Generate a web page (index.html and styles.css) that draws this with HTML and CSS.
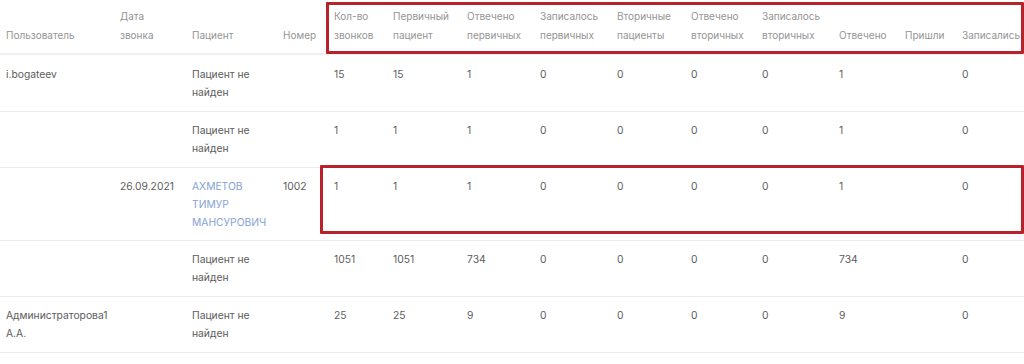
FILE: index.html
```html
<!DOCTYPE html>
<html lang="ru">
<head>
<meta charset="utf-8">
<title>Звонки</title>
<link rel="stylesheet" href="styles.css">
</head>
<body>
<div class="wrap">
  <table class="report">
    <colgroup>
      <col class="c1"><col class="c2"><col class="c3"><col class="c4"><col class="c5"><col class="c6"><col class="c7"><col class="c8"><col class="c9"><col class="c10"><col class="c11"><col class="c12"><col class="c13"><col class="c14">
    </colgroup>
    <thead>
      <tr>
        <th>Пользователь</th>
        <th>Дата<br>звонка</th>
        <th>Пациент</th>
        <th>Номер</th>
        <th>Кол-во<br>звонков</th>
        <th>Первичный<br>пациент</th>
        <th>Отвечено<br>первичных</th>
        <th>Записалось<br>первичных</th>
        <th>Вторичные<br>пациенты</th>
        <th>Отвечено<br>вторичных</th>
        <th>Записалось<br>вторичных</th>
        <th>Отвечено</th>
        <th>Пришли</th>
        <th>Записались</th>
      </tr>
    </thead>
    <tbody>
      <tr>
        <td>i.bogateev</td><td></td><td>Пациент не<br>найден</td><td></td>
        <td>15</td><td>15</td><td>1</td><td>0</td><td>0</td><td>0</td><td>0</td><td>1</td><td></td><td>0</td>
      </tr>
      <tr>
        <td></td><td></td><td>Пациент не<br>найден</td><td></td>
        <td>1</td><td>1</td><td>1</td><td>0</td><td>0</td><td>0</td><td>0</td><td>1</td><td></td><td>0</td>
      </tr>
      <tr class="tall">
        <td></td><td>26.09.2021</td><td><a class="link" href="#">АХМЕТОВ<br>ТИМУР<br>МАНСУРОВИЧ</a></td><td>1002</td>
        <td>1</td><td>1</td><td>1</td><td>0</td><td>0</td><td>0</td><td>0</td><td>1</td><td></td><td>0</td>
      </tr>
      <tr>
        <td></td><td></td><td>Пациент не<br>найден</td><td></td>
        <td>1051</td><td>1051</td><td>734</td><td>0</td><td>0</td><td>0</td><td>0</td><td>734</td><td></td><td>0</td>
      </tr>
      <tr>
        <td>Администраторова1<br>А.А.</td><td></td><td>Пациент не<br>найден</td><td></td>
        <td>25</td><td>25</td><td>9</td><td>0</td><td>0</td><td>0</td><td>0</td><td>9</td><td></td><td>0</td>
      </tr>
    </tbody>
  </table>
  <div class="mark mark-head"></div>
  <div class="mark mark-row"></div>
</div>
</body>
</html>
```

FILE: styles.css
```css
html, body {
  margin: 0;
  padding: 0;
  background: #ffffff;
}

body {
  font-family: Inter, "Noto Sans", "Liberation Sans", sans-serif;
  font-size: 10.3px;
  color: #5c5c5c;
  overflow: hidden;
}

.wrap {
  position: relative;
  width: 1024px;
}

.report {
  width: 1024px;
  border-collapse: collapse;
  table-layout: fixed;
}

.c1 { width: 114px; }
.c2 { width: 72px; }
.c3 { width: 91px; }
.c4 { width: 51px; }
.c5 { width: 59px; }
.c6 { width: 74px; }
.c7 { width: 73px; }
.c8 { width: 77px; }
.c9 { width: 74px; }
.c10 { width: 71px; }
.c11 { width: 77px; }
.c12 { width: 66px; }
.c13 { width: 57px; }
.c14 { width: 68px; }

.report th {
  font-weight: 400;
  font-size: 10px;
  color: #949494;
  text-align: left;
  vertical-align: bottom;
  line-height: 19px;
  padding: 7px 0 8px 6px;
  height: 37px;
  border-bottom: 2px solid #f0f0f0;
  white-space: nowrap;
}

.report td {
  vertical-align: top;
  line-height: 18px;
  padding: 9px 0 10px 6px;
  border-bottom: 1px solid #ececec;
  white-space: nowrap;
}

.report tbody tr:first-child td {
  padding-top: 10px;
}

.report tr.tall td {
  padding-bottom: 9px;
}

.link {
  color: #86a2d4;
  text-decoration: none;
}

.mark {
  position: absolute;
  border: 3px solid #b8232b;
  box-sizing: border-box;
  border-radius: 1px;
}

.mark-head {
  left: 326px;
  top: 2px;
  width: 698px;
  height: 52px;
}

.mark-row {
  left: 320px;
  top: 165px;
  width: 704px;
  height: 69px;
}
```
